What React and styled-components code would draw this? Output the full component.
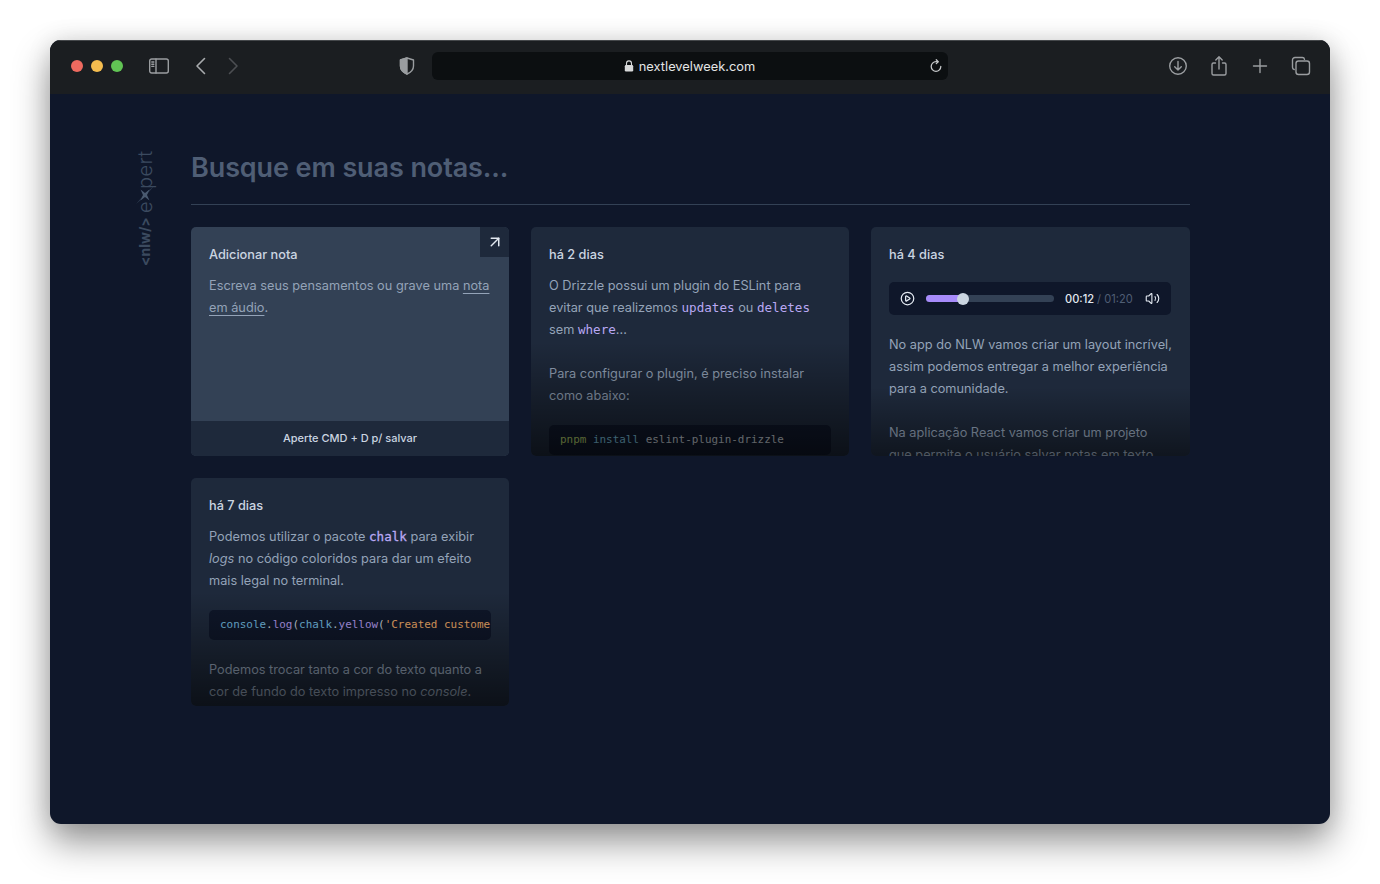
import React from 'react'
import styled, { createGlobalStyle } from 'styled-components'
import { ArrowUpRight, CirclePlay, Volume2 } from 'lucide-react'

const GlobalStyle = createGlobalStyle`
  html, body { margin: 0; padding: 0; background: #fff; }
  body { font-family: Inter, "Liberation Sans", sans-serif; }
  * { box-sizing: border-box; }
`

const Page = styled.div`
  width: 1380px;
  height: 884px;
  padding: 40px 50px 60px;
  overflow: hidden;
`

const Win = styled.div`
  height: 784px;
  border-radius: 11px;
  background: #0f172a;
  box-shadow: 0 18px 36px rgba(0, 0, 0, 0.42), 0 0 24px rgba(0, 0, 0, 0.1);
  overflow: hidden;
  display: flex;
  flex-direction: column;
`

// safari toolbar
const Toolbar = styled.header`
  height: 54px;
  flex: none;
  display: flex;
  align-items: center;
  padding-bottom: 3px;
  background: #1b1e21;
  border-top: 1px solid #45484b;
`

const ToolbarLeft = styled.div`
  width: 382px;
  display: flex;
  align-items: center;
  padding-left: 21px;
`

const Light = styled.span`
  width: 12px;
  height: 12px;
  border-radius: 50%;
  margin-right: 8px;
  background: ${(p) => p.$color};
`

const ToolIcon = styled.svg`
  flex: none;
  display: block;
  margin-left: ${(p) => p.$ml || 0}px;
  fill: none;
  stroke: ${(p) => p.$stroke || '#9a9da0'};
  stroke-width: ${(p) => p.$weight || 1.4};
  stroke-linecap: round;
  stroke-linejoin: round;
`

const Url = styled.div`
  position: relative;
  width: 516px;
  height: 28px;
  border-radius: 6px;
  background: #0c0f11;
  color: #e4e5e6;
  font-size: 12.85px;
  display: flex;
  align-items: center;
  justify-content: center;
  gap: 5px;
  padding-right: 1px;
`

const Reload = styled.svg`
  position: absolute;
  right: 5px;
  top: 7px;
  fill: none;
  stroke: #c4c6c8;
  stroke-width: 1.3;
  stroke-linecap: round;
  stroke-linejoin: round;
`

const ToolbarRight = styled.div`
  flex: 1;
  display: flex;
  align-items: center;
  padding-left: 220px;
  gap: 21px;
`

const Body = styled.main`
  flex: 1;
  display: flex;
  gap: 37px;
  padding: 56px 140px 0 86px;
`

const Logo = styled.div`
  width: 18px;
  height: 116px;
  flex: none;
  writing-mode: vertical-rl;
  transform: rotate(180deg);
  display: flex;
  align-items: center;
  color: #3b4a5f;
  white-space: nowrap;
  line-height: 18px;
`

const LogoBold = styled.span`
  font-size: 14px;
  font-weight: 700;
  margin-bottom: 4px;
`

const LogoLight = styled.span`
  font-size: 20px;
  font-weight: 300;
  letter-spacing: 0.4px;
`

const LogoMark = styled.svg`
  display: block;
  margin: -3px 0;
  flex: none;
`

const Content = styled.div`
  flex: 1;
`

const Title = styled.h1`
  margin: 0;
  height: 54px;
  padding: 2px 0 20px;
  font-size: 27px;
  line-height: 32px;
  font-weight: 600;
  letter-spacing: -0.1px;
  color: #4f5e75;
`

const Rule = styled.div`
  height: 1px;
  background: #334155;
  margin-bottom: 22px;
`

const Grid = styled.div`
  display: grid;
  grid-template-columns: 318px 318px 319px;
  grid-template-rows: 229px 228px;
  gap: 22px;
`

const Card = styled.article`
  position: relative;
  overflow: hidden;
  border-radius: 5px;
  background: ${(p) => (p.$add ? '#334155' : '#1e293b')};
  padding: 17px 18px;
  font-size: 12.75px;
  line-height: 22px;
  color: #94a3b8;
`

const Fade = styled.div`
  position: absolute;
  left: 0;
  right: 0;
  bottom: 0;
  height: ${(p) => p.$height || 50}%;
  pointer-events: none;
  background: linear-gradient(to top, rgba(0, 0, 0, ${(p) => p.$alpha || 0.6}), rgba(0, 0, 0, 0));
`

const Corner = styled.div`
  position: absolute;
  top: 0;
  right: 0;
  width: 29px;
  height: 30px;
  background: #1e293b;
  color: #e2e8f0;
  display: flex;
  align-items: center;
  justify-content: center;
`

const CardDate = styled.div`
  font-weight: 500;
  color: #cbd5e1;
  margin-bottom: 9px;
`

const CardText = styled.p`
  margin: 0 0 ${(p) => (p.$tight ? 18 : 22)}px;
`

const NoteLink = styled.span`
  text-decoration: underline;
  text-underline-offset: 2.5px;
  text-decoration-thickness: 1px;
  color: #94a3b8;
`

const InlineCode = styled.code`
  font-family: "DejaVu Sans Mono", "Liberation Mono", monospace;
  font-size: 12.6px;
  -webkit-text-stroke: ${(p) => (p.$strong ? '0.3px' : '0')};
  color: #b9a8f3;
`

const CodeBlock = styled.pre`
  margin: 0 0 19px;
  height: 30px;
  padding: 0 11px;
  border-radius: 5px;
  overflow: hidden;
  background: #0f172a;
  font-family: "DejaVu Sans Mono", "Liberation Mono", monospace;
  font-size: 10.95px;
  line-height: 30px;
  color: #c9d1d9;
`

const Tok = styled.span`
  color: ${(p) => p.$c};
`

const Footer = styled.div`
  position: absolute;
  left: 0;
  right: 0;
  bottom: 0;
  height: 35px;
  background: #1e293b;
  color: #cbd5e1;
  font-size: 11px;
  font-weight: 500;
  line-height: 35px;
  text-align: center;
`

// audio player
const Player = styled.div`
  height: 33px;
  margin: 16px 1px 19px 0;
  padding: 0 10px 0 11px;
  border-radius: 5px;
  background: #0f172a;
  display: flex;
  align-items: center;
  color: #e2e8f0;
`

const Track = styled.div`
  position: relative;
  width: 128px;
  height: 7px;
  margin: 0 11px;
  border-radius: 4px;
  background: #334155;
`

const TrackFill = styled.div`
  height: 100%;
  border-radius: 4px;
  background: #a78bfa;
`

const Thumb = styled.div`
  position: absolute;
  top: -2.5px;
  width: 12px;
  height: 12px;
  margin-left: -6px;
  border-radius: 50%;
  background: #cbd5e1;
`

const Time = styled.div`
  font-size: 11.1px;
  font-weight: 500;
  white-space: nowrap;
  color: #e2e8f0;
  margin-right: 12px;
`

const TimeDim = styled.span`
  font-weight: 400;
  color: #4f5e75;
`

const progress = 29

export default function App() {
  return (
    <Page>
      <GlobalStyle />
      <Win>
        <Toolbar>
          <ToolbarLeft>
            <Light $color="#ee6a5f" />
            <Light $color="#f5bd4f" />
            <Light $color="#61c454" />
            <ToolIcon $ml={18} width="20" height="16" viewBox="0 0 20 16">
              <rect x="0.7" y="1" width="18.6" height="14" rx="2" />
              <path d="M7 1v14M2.8 4h2M2.8 6.2h2M2.8 8.4h2" />
            </ToolIcon>
            <ToolIcon $ml={26} width="12" height="18" viewBox="0 0 12 18" $stroke="#a8abad" $weight={1.6}>
              <path d="M9.5 1.5 2 9l7.5 7.5" />
            </ToolIcon>
            <ToolIcon $ml={20} width="12" height="18" viewBox="0 0 12 18" $stroke="#4c4f52" $weight={1.6}>
              <path d="M2.5 1.5 10 9l-7.5 7.5" />
            </ToolIcon>
            <ToolIcon $ml={160} width="16" height="18" viewBox="0 0 16 18">
              <path d="M8 1 1.5 3v6c0 4 3 6.5 6.5 8 3.5-1.5 6.5-4 6.5-8V3L8 1Z" />
              <path d="M8 1 1.5 3v6c0 4 3 6.5 6.5 8V1Z" fill="#9a9da0" />
            </ToolIcon>
          </ToolbarLeft>
          <Url>
            <svg width="10" height="12" viewBox="0 0 10 12" fill="none">
              <rect x="0.8" y="5" width="8.4" height="6.5" rx="1.2" fill="#d8d9da" />
              <path d="M2.5 5V3.4a2.5 2.5 0 0 1 5 0V5" stroke="#d8d9da" strokeWidth="1.1" />
            </svg>
            nextlevelweek.com
            <Reload width="14" height="14" viewBox="0 0 14 14">
              <path d="M11.8 7.5a4.8 4.8 0 1 1-4.8-4.8h1.8" />
              <path d="M7.3 0.8 9.2 2.7 7.3 4.6" />
            </Reload>
          </Url>
          <ToolbarRight>
            <ToolIcon width="20" height="20" viewBox="0 0 20 20">
              <circle cx="10" cy="10" r="8.3" />
              <path d="M10 5.5v8.5M6.7 10.8 10 14l3.3-3.2" />
            </ToolIcon>
            <ToolIcon width="20" height="22" viewBox="0 0 20 22">
              <path d="M6.5 8H4.5A1.5 1.5 0 0 0 3 9.5v9A1.5 1.5 0 0 0 4.5 20h11a1.5 1.5 0 0 0 1.5-1.5v-9A1.5 1.5 0 0 0 15.5 8h-2" />
              <path d="M10 14V2M6.8 5 10 1.8 13.2 5" />
            </ToolIcon>
            <ToolIcon width="20" height="20" viewBox="0 0 20 20">
              <path d="M10 3.5v13M3.5 10h13" />
            </ToolIcon>
            <ToolIcon width="20" height="20" viewBox="0 0 20 20">
              <path d="M3.2 13.5A2.2 2.2 0 0 1 1.5 11.3V4A2.5 2.5 0 0 1 4 1.5h7.3a2.2 2.2 0 0 1 2.2 1.8" />
              <rect x="5" y="5" width="13.5" height="13.5" rx="2.5" />
            </ToolIcon>
          </ToolbarRight>
        </Toolbar>

        <Body>
          <Logo>
            <LogoBold>&lt;nlw/&gt;</LogoBold>
            <LogoLight>e</LogoLight>
            <LogoMark width="18" height="18" viewBox="0 0 18 18">
              <path d="M0 18 9 7.5 10.5 9 9 10.5Z M18 0 9 10.5 7.5 9 9 7.5Z" fill="#2c3a4e" />
              <path d="M4.5 3.5 9 7 13.5 3.5 11 9l2.5 5.5L9 11l-4.5 3.5L7 9Z" fill="#4a5a70" />
            </LogoMark>
            <LogoLight>pert</LogoLight>
          </Logo>

          <Content>
            <Title>Busque em suas notas...</Title>
            <Rule />
            <Grid>
              <Card $add>
                <CardDate>Adicionar nota</CardDate>
                <div>
                  Escreva seus pensamentos ou grave uma <NoteLink>nota em áudio</NoteLink>.
                </div>
                <Corner><ArrowUpRight size={18} strokeWidth={2} /></Corner>
                <Footer>Aperte CMD + D p/ salvar</Footer>
              </Card>

              <Card>
                <CardDate>há 2 dias</CardDate>
                <CardText>
                  O Drizzle possui um plugin do ESLint para evitar que realizemos <InlineCode>updates</InlineCode> ou <InlineCode>deletes</InlineCode> sem <InlineCode>where</InlineCode>...
                </CardText>
                <CardText $tight>Para configurar o plugin, é preciso instalar como abaixo:</CardText>
                <CodeBlock>
                  <Tok $c="#b5cf6a">pnpm</Tok> <Tok $c="#7ec4e0">install</Tok> eslint-plugin-drizzle
                </CodeBlock>
                <Fade />
              </Card>

              <Card>
                <CardDate>há 4 dias</CardDate>
                <Player>
                  <CirclePlay size={15} strokeWidth={2} />
                  <Track>
                    <TrackFill style={{ width: `${progress}%` }} />
                    <Thumb style={{ left: `${progress}%` }} />
                  </Track>
                  <Time>00:12 <TimeDim>/ 01:20</TimeDim></Time>
                  <Volume2 size={15} strokeWidth={1.8} />
                </Player>
                <CardText>No app do NLW vamos criar um layout incrível, assim podemos entregar a melhor experiência para a comunidade.</CardText>
                <CardText>Na aplicação React vamos criar um projeto que permite o usuário salvar notas em texto ou áudio.</CardText>
                <Fade $height={30} $alpha={0.48} />
              </Card>

              <Card>
                <CardDate>há 7 dias</CardDate>
                <CardText $tight>
                  Podemos utilizar o pacote <InlineCode $strong>chalk</InlineCode> para exibir <em>logs</em> no código coloridos para dar um efeito mais legal no terminal.
                </CardText>
                <CodeBlock>
                  <Tok $c="#74bce0">console</Tok>.<Tok $c="#b49cf0">log</Tok>(<Tok $c="#74bce0">chalk</Tok>.<Tok $c="#b49cf0">yellow</Tok>(<Tok $c="#f0ab68">'Created customer'</Tok>))
                </CodeBlock>
                <CardText>Podemos trocar tanto a cor do texto quanto a cor de fundo do texto impresso no <em>console</em>.</CardText>
                <Fade />
              </Card>
            </Grid>
          </Content>
        </Body>
      </Win>
    </Page>
  )
}
